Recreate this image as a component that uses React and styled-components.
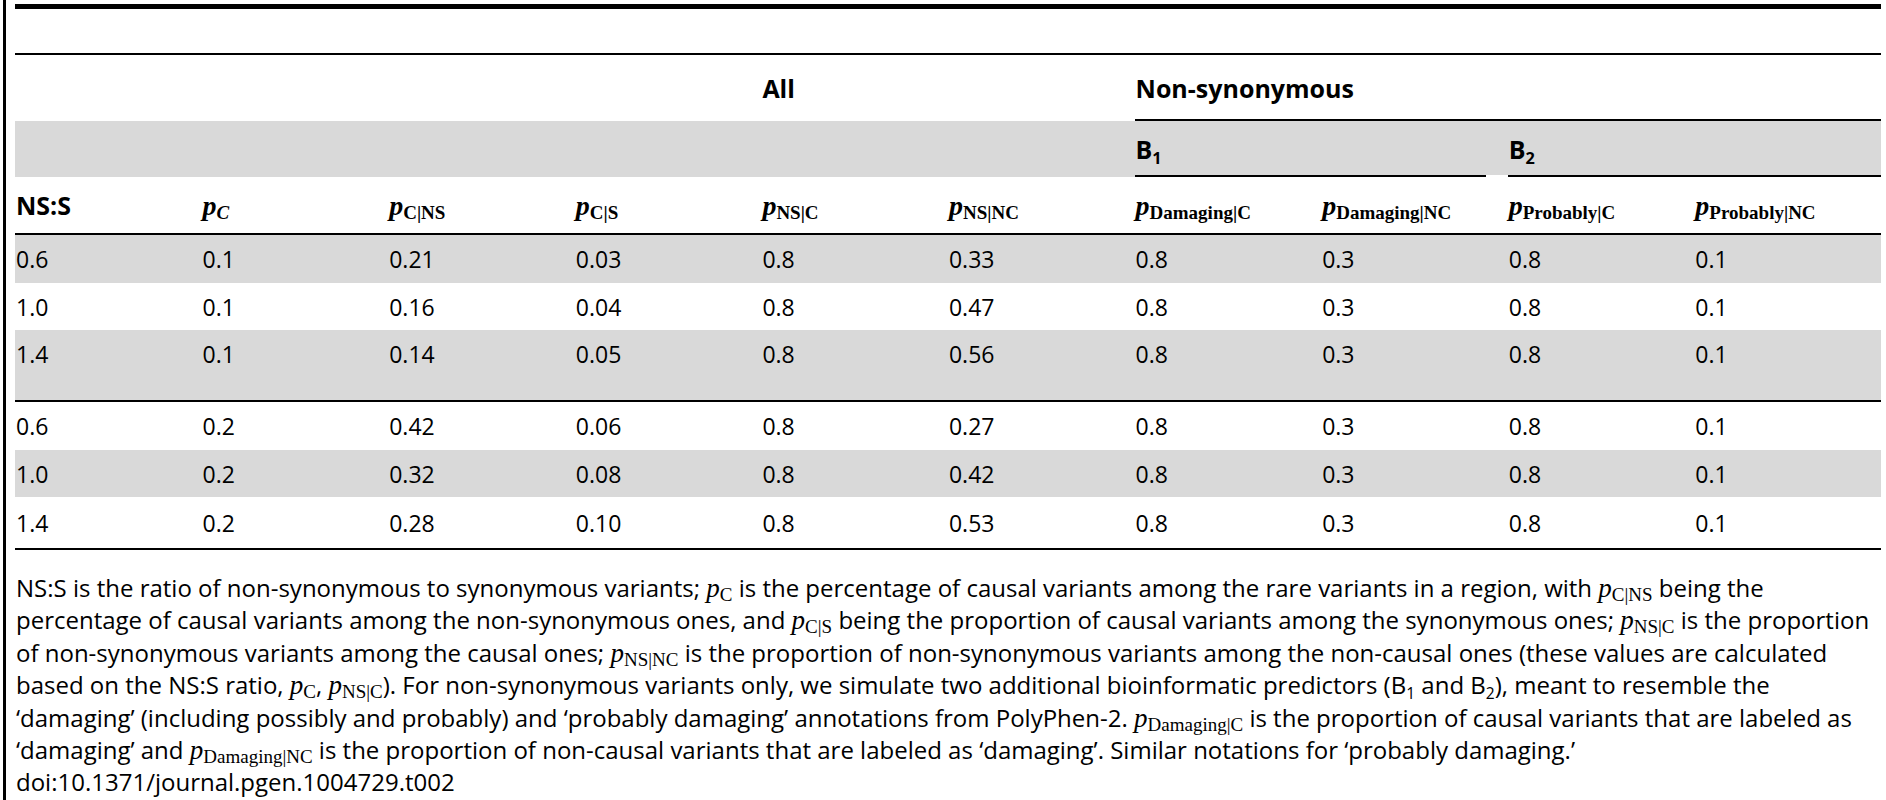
import React from 'react'
import styled, { createGlobalStyle } from 'styled-components'

const GlobalStyle = createGlobalStyle`
  html, body {
    margin: 0;
    padding: 0;
    background: #fff;
  }
  body {
    font-family: 'Open Sans', 'Liberation Sans', sans-serif;
    color: #000;
  }
`

const Page = styled.div`
  box-sizing: border-box;
  min-height: 100vh;
  margin-left: 3px;
  border-left: 3px solid #000;
  padding: 4px 5px 0 9px;
`

const Table = styled.table`
  width: 100%;
  table-layout: fixed;
  border-collapse: separate;
  border-spacing: 0;
  border-top: 5px solid #000;
  font-size: 23px;

  td {
    padding: 0 0 0 1px;
    vertical-align: middle;
    text-align: left;
    white-space: nowrap;
  }
`

const Row = styled.tr`
  & > td {
    height: ${p => p.$h}px;
    background: ${p => (p.$shade ? '#d9d9d9' : '#fff')};
    border-top: ${p => (p.$top ? '2px solid #000' : '0')};
    border-bottom: ${p => (p.$bottom ? '2px solid #000' : '0')};
  }
`

const HeadCell = styled.td`
  font-weight: 700;
  font-size: 25px;
  background: ${p =>
    p.$line
      ? `linear-gradient(to right, #000 calc(100% - ${p.$gap || 0}px), #fff 0) left bottom / 100% 2px no-repeat, ${p.$shade ? '#d9d9d9' : '#fff'}`
      : p.$shade
        ? '#d9d9d9'
        : '#fff'} !important;
`

const Var = styled.span`
  font-family: 'Liberation Serif', 'Times New Roman', serif;
  font-style: italic;
  font-weight: ${p => (p.$bold ? 700 : 400)};
  font-size: ${p => p.$size}px;
  white-space: nowrap;
`

const Sub = styled.sub`
  font-family: 'Liberation Serif', 'Times New Roman', serif;
  font-style: ${p => (p.$italic ? 'italic' : 'normal')};
  font-size: ${p => p.$size}px;
  line-height: 0;
  vertical-align: -0.22em;
`

const Index = styled.sub`
  font-size: 0.65em;
  line-height: 0;
  vertical-align: -0.3em;
`

const Caption = styled.div`
  margin-top: 22px;
  padding-left: 1px;
  font-size: 24px;
  line-height: 32.4px;
`

const Line = styled.div`
  white-space: nowrap;
`

const P = ({ sub, bold, italicSub, big }) => (
  <Var $bold={bold} $size={big ? 28 : 27}>
    p
    <Sub $italic={italicSub} $size={big ? 19 : 19}>
      {sub}
    </Sub>
  </Var>
)

const rows = [
  { h: 48, shade: true, v: ['0.6', '0.1', '0.21', '0.03', '0.8', '0.33', '0.8', '0.3', '0.8', '0.1'] },
  { h: 47, shade: false, v: ['1.0', '0.1', '0.16', '0.04', '0.8', '0.47', '0.8', '0.3', '0.8', '0.1'] },
  { h: 47, shade: true, v: ['1.4', '0.1', '0.14', '0.05', '0.8', '0.56', '0.8', '0.3', '0.8', '0.1'] },
  { h: 23, shade: true, v: Array(10).fill('') },
  { h: 48, shade: false, top: true, v: ['0.6', '0.2', '0.42', '0.06', '0.8', '0.27', '0.8', '0.3', '0.8', '0.1'] },
  { h: 47, shade: true, v: ['1.0', '0.2', '0.32', '0.08', '0.8', '0.42', '0.8', '0.3', '0.8', '0.1'] },
  { h: 51, shade: false, bottom: true, v: ['1.4', '0.2', '0.28', '0.10', '0.8', '0.53', '0.8', '0.3', '0.8', '0.1'] },
]

const labels = [
  'NS:S',
  <P key="c" big bold italicSub sub="C" />,
  <P key="cns" big bold sub="C|NS" />,
  <P key="cs" big bold sub="C|S" />,
  <P key="nsc" big bold sub="NS|C" />,
  <P key="nsnc" big bold sub="NS|NC" />,
  <P key="dc" big bold sub="Damaging|C" />,
  <P key="dnc" big bold sub="Damaging|NC" />,
  <P key="pc" big bold sub="Probably|C" />,
  <P key="pnc" big bold sub="Probably|NC" />,
]

const App = () => (
  <Page>
    <GlobalStyle />
    <Table>
      <colgroup>
        {labels.map((_, i) => (
          <col key={i} />
        ))}
      </colgroup>
      <thead>
        <Row $h={44} $bottom>
          <td colSpan={10} />
        </Row>
        <Row $h={66}>
          <HeadCell colSpan={4} />
          <HeadCell colSpan={2}>All</HeadCell>
          <HeadCell colSpan={4} $line>
            Non-synonymous
          </HeadCell>
        </Row>
        <Row $h={56} $shade>
          <HeadCell colSpan={6} $shade />
          <HeadCell colSpan={2} $shade $line $gap={22}>
            B<Index>1</Index>
          </HeadCell>
          <HeadCell colSpan={2} $shade $line>
            B<Index>2</Index>
          </HeadCell>
        </Row>
        <Row $h={56} $bottom>
          {labels.map((l, i) => (
            <HeadCell key={i}>{l}</HeadCell>
          ))}
        </Row>
      </thead>
      <tbody>
        {rows.map((r, i) => (
          <Row key={i} $h={r.h} $shade={r.shade} $top={r.top} $bottom={r.bottom}>
            {r.v.map((v, j) => (
              <td key={j}>{v}</td>
            ))}
          </Row>
        ))}
      </tbody>
    </Table>
    <Caption>
      <Line>
        NS:S is the ratio of non-synonymous to synonymous variants; <P sub="C" /> is the percentage of causal
        variants among the rare variants in a region, with <P sub="C|NS" /> being the
      </Line>
      <Line>
        percentage of causal variants among the non-synonymous ones, and <P sub="C|S" /> being the proportion of
        causal variants among the synonymous ones; <P sub="NS|C" /> is the proportion
      </Line>
      <Line>
        of non-synonymous variants among the causal ones; <P sub="NS|NC" /> is the proportion of non-synonymous
        variants among the non-causal ones (these values are calculated
      </Line>
      <Line>
        based on the NS:S ratio, <P sub="C" />, <P sub="NS|C" />). For non-synonymous variants only, we simulate two
        additional bioinformatic predictors (B<Index>1</Index> and B<Index>2</Index>), meant to resemble the
      </Line>
      <Line>
        ‘damaging’ (including possibly and probably) and ‘probably damaging’ annotations from PolyPhen-2.{' '}
        <P sub="Damaging|C" /> is the proportion of causal variants that are labeled as
      </Line>
      <Line>
        ‘damaging’ and <P sub="Damaging|NC" /> is the proportion of non-causal variants that are labeled as
        ‘damaging’. Similar notations for ‘probably damaging.’
      </Line>
      <Line>doi:10.1371/journal.pgen.1004729.t002</Line>
    </Caption>
  </Page>
)

export default App
